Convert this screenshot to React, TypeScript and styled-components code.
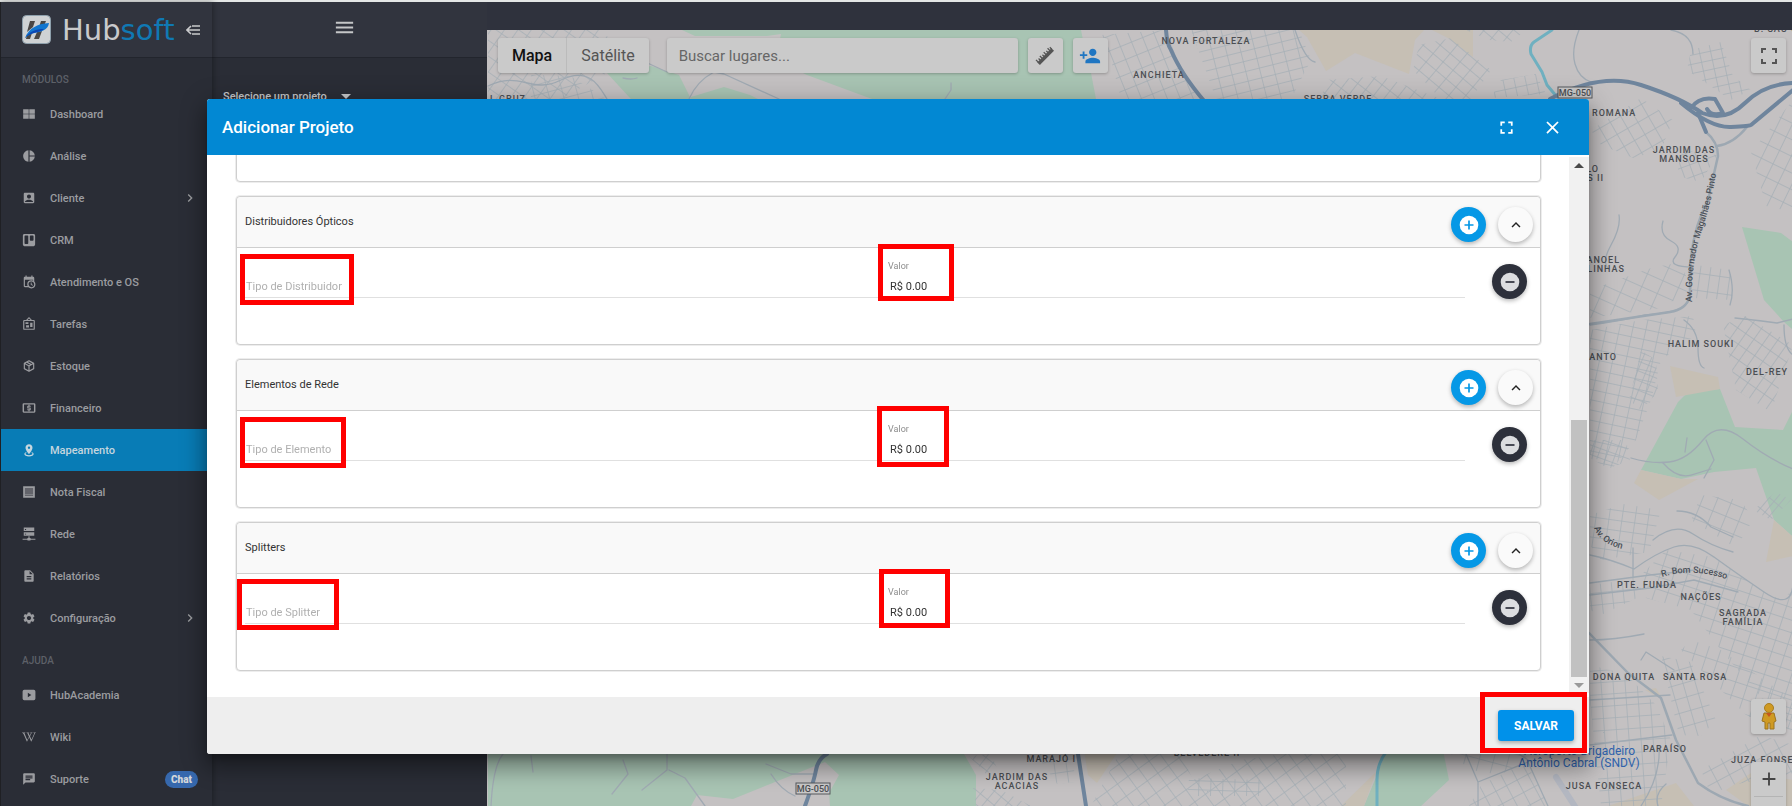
import React, { useId } from "react";
import styled, { createGlobalStyle, css } from "styled-components";
import {
  MdAccountBox,
  MdAdd,
  MdArrowDropDown,
  MdChat,
  MdChevronRight,
  MdClose,
  MdDescription,
  MdExpandLess,
  MdFullscreen,
  MdMenu,
  MdPersonAdd,
  MdPieChart,
  MdSettings,
} from "react-icons/md";
import { FaTrello, FaWikipediaW } from "react-icons/fa";

const GlobalStyle = createGlobalStyle`
  * { box-sizing: border-box; }
  body {
    margin: 0;
    background: #2a2d36;
    font-family: Roboto, "Liberation Sans", sans-serif;
    overflow: hidden;
  }
  button, input, select { font-family: inherit; }
`;

/* ---------- page frame ---------- */

const Page = styled.div`
  display: flex;
  height: 100vh;
  border-top: 2px solid #e4e7e6;
  background: #2a2d36;
`;

const Sidebar = styled.aside`
  display: flex;
  flex-direction: column;
  flex: 0 0 212px;
  border-left: 1px solid #1f2024;
  background: #2a2d36;
  box-shadow: 1px 0 6px rgba(0, 0, 0, 0.35);
  z-index: 1;
`;

const headerBar = css`
  display: flex;
  align-items: center;
  flex: 0 0 56px;
  background: #31343e;
  border-bottom: 1px solid #22252d;
`;

const BrandBar = styled.header`
  ${headerBar}
  padding: 0 12px 0 21px;
`;

const BrandMark = styled.svg`
  width: 29px;
  height: 29px;
`;

const BrandName = styled.span`
  margin-left: 11px;
  flex: 1;
  font-family: "DejaVu Sans", sans-serif;
  font-size: 29px;
  line-height: 32px;
  color: #c9cacc;

  span {
    color: #1079b4;
  }
`;

const BareButton = styled.button`
  display: flex;
  padding: 0;
  border: 0;
  background: none;
  color: inherit;
`;

const CollapseButton = styled(BareButton)`
  color: #c9cacc;
`;

const GroupTitle = styled.h2`
  margin: 0;
  padding: 15px 21px 6px;
  font-size: 10px;
  line-height: 14px;
  font-weight: 500;
  color: #5d6068;
`;

const NavItem = styled.a<{ $active?: boolean }>`
  display: flex;
  align-items: center;
  height: 42px;
  padding: 0 14px 0 21px;
  font-size: 11px;
  font-weight: 500;
  text-decoration: none;
  color: ${(p) => (p.$active ? "#c5d6df" : "#9b9ca0")};
  background: ${(p) => (p.$active ? "#087cb6" : "transparent")};

  svg {
    width: 14px;
    height: 14px;
  }
`;

const NavText = styled.span`
  flex: 1;
  margin-left: 14px;
`;

const MoreIcon = styled(MdChevronRight)`
  && {
    width: 16px;
    height: 16px;
    stroke: currentColor;
  }
`;

const ChatBadge = styled.span`
  padding: 0 6px;
  border-radius: 9px;
  background: #3668ad;
  color: #d3d6da;
  font-size: 10px;
  line-height: 17px;
  font-weight: 900;
`;

const ProjectPanel = styled.section`
  flex: 0 0 275px;
  background: #2a2d36;
`;

const PanelBar = styled.header`
  ${headerBar}
  height: 56px;
  justify-content: center;
  color: #c5c6c8;
  padding: 0 11px 4px 0;

  svg {
    width: 23px;
    height: 23px;
    stroke: currentColor;
  }
`;

const ProjectPicker = styled.label`
  display: flex;
  align-items: center;
  padding: 26px 11px;
  color: #c5c6c8;

  svg {
    margin-left: -12px;
    width: 24px;
    height: 24px;
    pointer-events: none;
  }
`;

const ProjectSelect = styled.select`
  appearance: none;
  width: 123px;
  padding: 0;
  border: 0;
  background: none;
  color: inherit;
  font-size: 11px;
  font-weight: 500;
`;

const MapColumn = styled.main`
  display: flex;
  flex-direction: column;
  flex: 1;
  min-width: 0;
`;

const TopBar = styled.div`
  flex: 0 0 28px;
  background: #2f323d;
`;

/* ---------- map ---------- */

const MapArea = styled.div`
  position: relative;
  flex: 1;
  min-height: 0;
  overflow: hidden;
  background: #c4c1c2;
`;

const MapCanvas = styled.svg`
  display: block;
  width: 100%;
  height: 100%;
`;

const MapTools = styled.div`
  position: absolute;
  inset: 8px 6px auto 11px;
  display: flex;
  gap: 10px;
`;

const mapCard = css`
  border: 0;
  border-radius: 3px;
  background: #cacaca;
  box-shadow: 0 1px 3px rgba(0, 0, 0, 0.25);
`;

const MapTypes = styled.div`
  ${mapCard}
  display: flex;
  height: 35px;
  margin-right: 8px;
`;

const MapType = styled.button<{ $on?: boolean }>`
  padding: 0 14px;
  border: 0;
  background: none;
  font-size: 16px;
  font-weight: ${(p) => (p.$on ? 500 : 400)};
  color: ${(p) => (p.$on ? "#111" : "#555")};

  & + & {
    border-left: 1px solid #bbb;
  }
`;

const MapSearch = styled.input`
  ${mapCard}
  width: 351px;
  height: 35px;
  padding: 0 12px;
  font-size: 15px;

  &::placeholder {
    color: #666;
    opacity: 1;
  }
`;

const MapButton = styled.button`
  ${mapCard}
  display: flex;
  align-items: center;
  justify-content: center;
  width: 35px;
  height: 35px;
  padding: 0;
  color: #555;
`;

const PersonIcon = styled(MdPersonAdd)`
  width: 22px;
  height: 22px;
  color: #1f76c2;
`;

const Spacer = styled.div`
  flex: 1;
`;

const MapCorner = styled.div`
  position: absolute;
  right: 6px;
  bottom: -36px;
  display: flex;
  flex-direction: column;
  gap: 28px;
`;

const ZoomControl = styled.div`
  ${mapCard}
  display: flex;
  flex-direction: column;
  align-items: center;
  height: 80px;
`;

const ZoomButton = styled(BareButton)`
  width: 29px;
  height: 35px;
  align-items: center;
  justify-content: center;
  color: #444;
  border-bottom: 1px solid #b4b4b4;

  svg {
    stroke: currentColor;
  }
`;

const PlaceLabel = styled.text`
  font-size: 9px;
  font-weight: 500;
  letter-spacing: 1px;
  fill: #4b4e52;
`;

const RoadLabel = styled.text`
  font-size: 9px;
  font-weight: 500;
  fill: #4a5058;
`;

const AirportLabel = styled.text`
  font-size: 12px;
  fill: #2f62ac;
`;

const ShieldLabel = styled.text`
  font-size: 9px;
  font-weight: 500;
  fill: #4b4e52;
`;

/* ---------- dialog ---------- */

const Overlay = styled.div`
  position: fixed;
  inset: 0;
  z-index: 2;
  display: flex;
  padding: 99px 203px 52px 207px;
`;

const Dialog = styled.section`
  display: flex;
  flex-direction: column;
  flex: 1;
  min-width: 0;
  border-radius: 3px;
  background: #fff;
  box-shadow: 0 7px 9px -4px rgba(0, 0, 0, 0.3),
    0 14px 21px 2px rgba(0, 0, 0, 0.24), 0 5px 26px 4px rgba(0, 0, 0, 0.2);
`;

const DialogHeader = styled.header`
  display: flex;
  align-items: center;
  flex: 0 0 56px;
  padding: 0 26px 0 15px;
  border-radius: 3px 3px 0 0;
  background: #0288d3;
  color: #fff;
`;

const DialogTitle = styled.h1`
  flex: 1;
  margin: 0;
  font-size: 17px;
  font-weight: 500;
`;

const DialogActions = styled.div`
  display: flex;
  gap: 25px;

  svg {
    width: 21px;
    height: 21px;
    stroke: currentColor;
  }
`;

const DialogBody = styled.div`
  display: flex;
  flex: 1;
  min-height: 0;
`;

const CardList = styled.div`
  display: flex;
  flex-direction: column;
  justify-content: flex-end;
  gap: 14px;
  flex: 1;
  min-width: 0;
  padding: 0 28px 26px 29px;
  overflow: hidden;
`;

const Card = styled.section`
  flex: 0 0 149px;
  border: 1px solid #cfcfcf;
  border-radius: 4px;
  background: #fff;
  box-shadow: 0 0 0 1px #ededed;
`;

const CardHeader = styled.header`
  display: flex;
  gap: 12px;
  height: 51px;
  padding: 10px 7px 0 8px;
  border-bottom: 1px solid #cfcfcf;
  border-radius: 4px 4px 0 0;
  background: #f9f9f9;
`;

const CardTitle = styled.h2`
  flex: 1;
  margin: 0;
  padding-top: 7px;
  font-size: 11px;
  line-height: 16px;
  font-weight: 400;
  color: #333;
`;

const tones = {
  add: "#0598e6",
  fold: "#fafafa",
  remove: "#2d303b",
};

const RoundButton = styled.button<{ $tone: keyof typeof tones }>`
  display: flex;
  align-items: center;
  justify-content: center;
  flex: 0 0 35px;
  height: 35px;
  padding: 0;
  border: 0;
  border-radius: 50%;
  background: ${(p) => tones[p.$tone]};
  color: #222;
  box-shadow: 0 2px 4px rgba(0, 0, 0, 0.28);
`;

const CardRow = styled.div`
  display: flex;
  align-items: flex-start;
  gap: 27px;
  padding: 0 13px 0 8px;
`;

const RowButton = styled(RoundButton)`
  margin-top: 16px;
`;

const Fields = styled.div`
  display: grid;
  grid-template-columns: 10fr 9fr;
  flex: 1;
  height: 50px;
  border-bottom: 1px solid #e0e0e0;
`;

const Field = styled.div`
  position: relative;
  display: flex;
  flex-direction: column;
  justify-content: flex-end;
  padding: 0 0 3px 1px;
`;

const FieldLabel = styled.label`
  font-size: 9px;
  line-height: 12px;
  color: #8c8c8c;
`;

const FieldInput = styled.input`
  width: 100%;
  height: 16px;
  margin-top: 1px;
  padding: 0;
  border: 0;
  background: none;
  font-size: 11px;
  color: #333;
  outline: 0;

  &::placeholder {
    color: #b0b0b0;
    opacity: 1;
  }
`;

const ValueInput = styled(FieldInput)`
  margin-top: 6px;
  padding-left: 2px;
`;

/* Red frame drawn over the part of the form it points out. */
const Highlight = styled.span<{ $x: number; $y: number; $w: number; $h: number }>`
  position: absolute;
  left: ${(p) => p.$x}px;
  top: ${(p) => p.$y}px;
  width: ${(p) => p.$w}px;
  height: ${(p) => p.$h}px;
  border: 5px solid #f00;
  pointer-events: none;
`;

const ScrollColumn = styled.div`
  display: flex;
  flex-direction: column;
  align-items: center;
  flex: 0 0 20px;
  margin: 2px 0 4px;
  background: #f1f1f1;
`;

const ScrollArrow = styled.svg`
  flex: 0 0 16px;
  width: 20px;
`;

const ScrollTrack = styled.div`
  display: flex;
  flex-direction: column;
  justify-content: flex-end;
  flex: 1;
  width: 16px;
`;

const ScrollThumb = styled.div`
  height: 51%;
  background: #c1c1c1;
`;

const DialogFooter = styled.footer`
  display: flex;
  align-items: center;
  justify-content: flex-end;
  flex: 0 0 57px;
  padding: 0 15px;
  border-radius: 0 0 3px 3px;
  background: #eee;
`;

const SaveSlot = styled.div`
  position: relative;
`;

const SaveButton = styled.button`
  width: 76px;
  height: 31px;
  padding: 0;
  border: 0;
  border-radius: 3px;
  background: #0091ea;
  color: #fff;
  font-size: 12px;
  font-weight: 700;
  box-shadow: 0 2px 4px rgba(0, 0, 0, 0.3);
`;

/* ---------- icons ---------- */

const Glyph = ({ d }: { d: string }) => (
  <svg viewBox="0 0 24 24" fill="currentColor" aria-hidden="true">
    <path fillRule="evenodd" d={d} />
  </svg>
);

const icons = {
  grid: "M2 4h9.500v7.500H2zM12.500 4H22v7.500h-9.500zM2 12.500h9.500V20H2zM12.500 12.500H22V20h-9.500z",
  calendarClock:
    "M15,13H16.5V15.82L18.94,17.23L18.19,18.53L15,16.69V13M19,8H5V19H9.67C9.24,18.09 9,17.07 9,16A7,7 0 0,1 16,9C17.07,9 18.09,9.24 19,9.67V8M5,21C3.89,21 3,20.1 3,19V5C3,3.89 3.89,3 5,3H6V1H8V3H16V1H18V3H19A2,2 0 0,1 21,5V11.1C22.24,12.36 23,14.09 23,16A7,7 0 0,1 16,23C14.09,23 12.36,22.24 11.1,21H5M16,11.15A4.85,4.85 0 0,0 11.15,16C11.15,18.68 13.32,20.85 16,20.85A4.85,4.85 0 0,0 20.85,16C20.85,13.32 18.68,11.15 16,11.15Z",
  board:
    "M12.04,2.5L9.53,5H14.53L12.04,2.5M4,7V20H20V7H4M12,0L17,5V5H20A2,2 0 0,1 22,7V20A2,2 0 0,1 20,22H4A2,2 0 0,1 2,20V7A2,2 0 0,1 4,5H7V5L12,0M7,18V14H12V18H7M14,17V10H18V17H14M6,12V9H11V12H6Z",
  box: "M21,16.5C21,16.88 20.79,17.21 20.47,17.38L12.57,21.82C12.41,21.94 12.21,22 12,22C11.79,22 11.59,21.94 11.43,21.82L3.53,17.38C3.21,17.21 3,16.88 3,16.5V7.5C3,7.12 3.21,6.79 3.53,6.62L11.43,2.18C11.59,2.06 11.79,2 12,2C12.21,2 12.41,2.06 12.57,2.18L20.47,6.62C20.79,6.79 21,7.12 21,7.5V16.5M12,4.15L10.11,5.22L16,8.61L17.96,7.5L12,4.15M6.04,7.5L12,10.85L13.96,9.75L8.08,6.35L6.04,7.5M5,15.91L11,19.29V12.58L5,9.21V15.91M19,15.91V9.21L13,12.58V19.29L19,15.91Z",
  cash: "M3 4h18a2 2 0 0 1 2 2v12a2 2 0 0 1-2 2H3a2 2 0 0 1-2-2V6a2 2 0 0 1 2-2M3.500 6v12h17V6zM11 6.500h2V8h2v2h-4v1h3a1 1 0 0 1 1 1v3a1 1 0 0 1-1 1h-1v1.500h-2V16H9v-2h4v-1h-3a1 1 0 0 1-1-1V9a1 1 0 0 1 1-1h1z",
  marker:
    "M12,2C15.31,2 18,4.66 18,7.95C18,12.41 12,19 12,19C12,19 6,12.41 6,7.95C6,4.66 8.69,2 12,2M12,6A2,2 0 0,0 10,8A2,2 0 0,0 12,10A2,2 0 0,0 14,8A2,2 0 0,0 12,6M20,19C20,21.21 16.42,23 12,23C7.58,23 4,21.21 4,19C4,17.71 5.22,16.56 7.11,15.83L7.75,16.74C6.67,17.19 6,17.81 6,18.5C6,19.88 8.69,21 12,21C15.31,21 18,19.88 18,18.5C18,17.81 17.33,17.19 16.25,16.74L16.89,15.83C18.78,16.56 20,17.71 20,19Z",
  note: "M2 2h20v20H2zM5 6v1.500h14V6zM5 9.500V11h14V9.500zM5 13v1.500h14V13zM5 16.500V18h14v-1.500z",
  server:
    "M3 1h18v6H3zM3 9h18v6H3zM5 3.500V5h2V3.500zM5 11.500V13h2v-1.500zM11 16h2v3h1a1 1 0 0 1 1 1h8v2h-8a1 1 0 0 1-1 1h-4a1 1 0 0 1-1-1H1v-2h8a1 1 0 0 1 1-1h1z",
  video:
    "M4 3h16a3 3 0 0 1 3 3v12a3 3 0 0 1-3 3H4a3 3 0 0 1-3-3V6a3 3 0 0 1 3-3M10 8v8l6-4z",
};

const LogoIcon = () => (
  <BrandMark viewBox="0 0 29 29" aria-hidden="true">
    <rect x="0.500" y="0.500" width="28" height="28" rx="4" fill="#cfd2d4" stroke="#8ea0ac" />
    <path d="M8 6h5l-2 6-6 5zM19 6h5l-2 5-5 1zM15 17l5-1-3 8h-5zM5 19l5-1-2 6H4z" fill="#4a4745" />
    <path d="M3 23C7 13 15 9 27 8c-1 7-8 9-15 10-4 1-7 3-9 5z" fill="#1276cf" />
    <path d="M3 23C8 16 14 14 22 14c-4 4-14 3-19 9z" fill="#0b46b4" />
  </BrandMark>
);

const CollapseIcon = () => (
  <svg width="14" height="12" viewBox="0 0 14 12" fill="none" stroke="currentColor" strokeWidth="1.600" aria-hidden="true">
    <path d="M6 2h8M2 6h12M6 10h8M5 2L1 6l4 4" />
  </svg>
);

const RulerIcon = () => (
  <svg width="20" height="20" viewBox="0 0 22 22" aria-hidden="true">
    <g transform="rotate(-45 11 11)">
      <rect x="0" y="10" width="22" height="4" fill="#555" />
      <path d="M1 7v4M4 8v3M7 7v4M10 8v3M13 7v4M16 8v3M19 7v4M21.500 8v3" stroke="#555" strokeWidth="1.400" />
    </g>
  </svg>
);

const ExpandIcon = ({ size }: { size: number }) => (
  <svg width={size} height={size} viewBox="0 0 16 16" fill="none" stroke="currentColor" strokeWidth="2" aria-hidden="true">
    <path d="M1 5V1h4M11 1h4v4M15 11v4h-4M5 15H1v-4" />
  </svg>
);

const PegmanIcon = () => (
  <svg width="16" height="27" viewBox="0 0 16 27" aria-hidden="true">
    <path d="M3 10h10l2 8-2 1v7H9v-6H7v6H4v-7l-3-1z" fill="#cf9a23" stroke="#9c7420" />
    <circle cx="8" cy="5" r="4.500" fill="#cf9a23" stroke="#a87c20" />
    <path d="M5 10h6l-3 4z" fill="#c4561f" />
  </svg>
);

const CircleIcon = ({ disc, ink, plus }: { disc: string; ink: string; plus?: boolean }) => (
  <svg width="20" height="20" viewBox="0 0 20 20" aria-hidden="true">
    <circle cx="10" cy="10" r="9.300" fill={disc} />
    <path d={plus ? "M5.500 10h9M10 5.500v9" : "M5.500 10h9"} stroke={ink} strokeWidth="1.700" />
  </svg>
);

/* ---------- map drawing ---------- */

type Patch = { points: string; angle: number; w: number; h: number };

/* A neighbourhood: a polygon filled with a rotated street grid. */
const Streets = ({ points, angle, w, h }: Patch) => {
  const id = useId();
  return (
    <>
      <pattern id={id} width={w} height={h} patternUnits="userSpaceOnUse" patternTransform={`rotate(${angle})`}>
        <path d={`M0 0H${w}M0 0V${h}`} stroke="#a6afb6" strokeWidth="1.500" fill="none" />
      </pattern>
      <polygon points={points} fill={`url(#${id})`} />
    </>
  );
};

const greens = [
  "681,30 694,36 766,36 780,34 775,60 806,75 871,99 871,130 1100,130 1095,99 1090,73 1083,45 1080,30",
  "606,73 650,66 678,75 690,99 690,110 640,110",
  "690,97 723,87 749,95 757,99 757,110 690,110",
  "1741,227 1780,233 1792,242 1792,330 1783,322 1763,300",
  "1677,402 1687,392 1719,389 1734,427 1782,430 1792,410 1792,537 1773,520 1755,468 1713,472 1680,479 1640,470",
  "487,740 955,740 975,775 975,806 829,806 828,793 838,775 824,762 732,799 696,795 690,806 487,806",
  "1390,740 1440,740 1448,780 1420,806 1363,806 1378,770",
];

const sands = [
  "1298,30 1306,37 1325,71 1354,53 1408,74 1414,40 1423,30",
  "1431,30 1472,30 1472,57 1447,38",
  "1669,366 1717,377 1719,389 1675,397",
  "1640,470 1633,483 1658,500 1697,479 1680,479",
  "1773,520 1792,537 1792,556 1765,562",
  "1607,806 1675,783 1693,806",
  "1725,790 1750,773 1792,780 1792,806 1747,806",
  "1340,806 1375,772 1363,806",
  "1083,750 1118,750 1096,783 1087,775",
  "1644,690 1655,688 1662,700",
];

const patches: Patch[] = [
  { points: "487,30 600,30 612,42 640,50 650,66 606,73 560,99 487,99", angle: 35, w: 11, h: 13 },
  { points: "530,75 570,76 605,99 530,99", angle: -15, w: 14, h: 10 },
  { points: "1100,35 1165,30 1180,70 1200,99 1120,99 1110,60", angle: -22, w: 12, h: 14 },
  { points: "1190,30 1298,30 1310,60 1290,99 1215,99", angle: -14, w: 14, h: 10 },
  { points: "1325,80 1380,76 1440,99 1320,99", angle: 38, w: 10, h: 14 },
  { points: "1418,45 1450,38 1490,70 1470,99 1440,99 1412,70", angle: 40, w: 13, h: 11 },
  { points: "1465,30 1525,30 1510,42 1488,40", angle: 40, w: 11, h: 10 },
  { points: "1500,80 1535,74 1545,94 1490,98", angle: -12, w: 11, h: 10 },
  { points: "1690,50 1720,42 1732,76 1750,90 1730,100 1686,70", angle: -12, w: 11, h: 9 },
  { points: "1590,130 1640,98 1672,120 1660,150 1632,158 1600,145", angle: -30, w: 12, h: 14 },
  { points: "1680,150 1716,155 1700,182 1676,176", angle: -20, w: 9, h: 12 },
  { points: "1750,152 1792,100 1792,212 1765,206", angle: 26, w: 13, h: 15 },
  { points: "1589,290 1650,268 1680,262 1690,290 1660,308 1589,318", angle: 24, w: 17, h: 14 },
  { points: "1689,264 1728,270 1732,300 1692,298", angle: 8, w: 10, h: 17 },
  { points: "1589,330 1640,320 1692,316 1695,335 1660,360 1650,400 1635,440 1610,470 1589,458", angle: 12, w: 13, h: 10 },
  { points: "1640,350 1655,360 1657,392 1640,410 1628,400", angle: 22, w: 8, h: 9 },
  { points: "1722,325 1745,316 1792,345 1770,412 1735,390", angle: 35, w: 10, h: 13 },
  { points: "1589,440 1625,440 1629,460 1610,468 1589,455", angle: 20, w: 8, h: 9 },
  { points: "1589,515 1622,504 1660,510 1648,552 1600,560 1589,545", angle: 8, w: 13, h: 10 },
  { points: "1700,495 1740,500 1752,520 1735,548 1690,520", angle: 22, w: 14, h: 14 },
  { points: "1752,510 1775,492 1790,500 1770,520", angle: 40, w: 6, h: 14 },
  { points: "1640,575 1665,550 1712,557 1760,590 1780,600 1792,590 1792,735 1720,650 1690,610 1645,598", angle: 18, w: 13, h: 12 },
  { points: "1720,650 1690,640 1680,650 1745,715 1792,740 1792,700", angle: 18, w: 12, h: 14 },
  { points: "1589,585 1640,578 1640,596 1600,615 1589,610", angle: -6, w: 11, h: 12 },
  { points: "1589,665 1625,674 1655,705 1670,740 1660,806 1600,806 1589,700", angle: -4, w: 12, h: 12 },
  { points: "1660,656 1690,662 1715,720 1700,736 1678,735", angle: -16, w: 12, h: 14 },
  { points: "1700,770 1760,735 1792,745 1792,775 1730,785 1710,795", angle: -28, w: 14, h: 13 },
  { points: "1480,785 1525,762 1548,806 1468,806", angle: -28, w: 12, h: 14 },
  { points: "1090,806 1120,750 1180,754 1192,780 1240,760 1345,745 1345,806", angle: -36, w: 13, h: 15 },
  { points: "1188,778 1260,780 1260,796 1186,796", angle: 2, w: 12, h: 9 },
  { points: "972,788 1000,790 1030,806 975,806", angle: 40, w: 9, h: 11 },
  { points: "968,756 990,754 996,768 985,774", angle: 38, w: 9, h: 10 },
  { points: "1035,754 1072,754 1074,782 1056,784", angle: -8, w: 12, h: 12 },
  { points: "1450,754 1530,754 1500,775 1470,770", angle: 15, w: 14, h: 14 },
];

const lanes = [
  "M487 86C520 70 530 95 560 80S600 90 606 99",
  "M622 78q8 2 14 0M640 60l26 12M688 99q8-18 25-27l10 2 55 25M944 99l6-9v-7",
  "M1294 30q10 30 20 32M1578 30q-8 20-4 34t16 18M1670 30q22 4 22 24",
  "M1618 215q2 12-8 30t-2 24M1662 221q-4 14 8 20t4 16 18 10M1728 270q6 20 1 35",
  "M1589 325q30-4 55-10 40-2 45-17l2-30M1683 320q14 10 14 28t6 20M1734 318q20 2 42 5l16-4M1783 325q0 24 9 30",
  "M1630 458q20 6 38 4t34-22 40-1 50 30M1686 438l-2 14M1705 440l8 20-10 18",
  "M1662 463q14 16 28 12l20-6",
  "M1676 511q20 0 34 16l22 10M1652 540q22-18 40-6t40 18",
  "M1589 555q20 4 44 14 22-16 40-22t40 10 50 35 29-9",
  "M1632 548v30M1589 583l60-8 45-5 M1589 595l60-7 44-8 44 12",
  "M1589 640q24 0 54-6M1640 660l5-8 28 18M1589 700l80-5M1589 745l82-10",
  "M1465 754l12 28 50-20 20 44M1477 782v24M1518 754l12 8",
  "M1640 806q20-30 18-60M1657 806q-4-12 8-22",
  "M490 806q2-40 12-52M622 760l5 14-16 20 M666 754v16l-25 20M668 770l16 8 20 28M765 764l25 10h25M770 774q10 16 24 22M530 756l2 16",
];

const mainRoads = [
  "M1588 633L1627 673 1660 698 1675 740 1697 783Q1720 800 1747 806",
  "M1705 132q12 10 12 24l-10 44q-16 30-18 70v26q-4 14-20 16l-80 12",
  "M1716 146q16-2 30-19",
];

const highways = [
  "M1165 30q1 14 5 20 10 24 34 52",
  "M1549 99Q1600 72 1640 85T1701 113Q1725 122 1744 103T1792 83",
  "M1680 103Q1710 128 1730 127T1750 125L1792 90",
  "M1690 108q8-12 24-9l8 14q-12 4-16-4",
  "M1697 113l8 19",
  "M826 754q-9 5-11 16T804 806",
  "M1077 754L1085 806",
];

type Place = { x: number; y: number; text: string; anchor?: "start" | "middle" | "end" };

const places: Place[] = [
  { x: 1205, y: 44, text: "NOVA FORTALEZA" },
  { x: 1158, y: 78, text: "ANCHIETA" },
  { x: 1337, y: 102, text: "SERRA VERDE" },
  { x: 489, y: 102, text: "L CRUZ", anchor: "start" },
  { x: 1753, y: 32, text: "B. SÃO C", anchor: "start" },
  { x: 1591, y: 116, text: "ROMANA", anchor: "start" },
  { x: 1683, y: 153, text: "JARDIM DAS" },
  { x: 1683, y: 162, text: "MANSOES" },
  { x: 1598, y: 172, text: "LO", anchor: "end" },
  { x: 1603, y: 181, text: "S II", anchor: "end" },
  { x: 1619, y: 263, text: "MANOEL", anchor: "end" },
  { x: 1624, y: 272, text: "LINHAS", anchor: "end" },
  { x: 1700, y: 347, text: "HALIM SOUKI" },
  { x: 1616, y: 360, text: "SANTO", anchor: "end" },
  { x: 1766, y: 375, text: "DEL-REY" },
  { x: 1646, y: 588, text: "PTE. FUNDA" },
  { x: 1700, y: 600, text: "NAÇÕES" },
  { x: 1742, y: 616, text: "SAGRADA" },
  { x: 1742, y: 625, text: "FAMÍLIA" },
  { x: 1623, y: 680, text: "DONA QUITA" },
  { x: 1694, y: 680, text: "SANTA ROSA" },
  { x: 1664, y: 752, text: "PARAÍSO" },
  { x: 1730, y: 763, text: "JUZA FONSECA", anchor: "start" },
  { x: 1603, y: 789, text: "JUSA FONSECA" },
  { x: 1075, y: 762, text: "MARAJÓ I", anchor: "end" },
  { x: 1016, y: 780, text: "JARDIM DAS" },
  { x: 1016, y: 789, text: "ACACIAS" },
  { x: 1206, y: 756, text: "BELVEDERE II" },
];

const Shield = ({ x, y }: { x: number; y: number }) => (
  <g>
    <rect x={x} y={y} width="34" height="11" fill="#c9c8c8" stroke="#55585c" />
    <ShieldLabel x={x + 17} y={y + 9} textAnchor="middle">
      MG-050
    </ShieldLabel>
  </g>
);

const CityMap = () => (
  <MapCanvas viewBox="486 30 1305 776" preserveAspectRatio="xMinYMin slice" role="img" aria-label="Mapa">
    <g fill="#a8c4b3">
      {greens.map((p) => (
        <polygon key={p} points={p} />
      ))}
    </g>
    <g fill="#c6bfb4">
      {sands.map((p) => (
        <polygon key={p} points={p} />
      ))}
    </g>
    {patches.map((p) => (
      <Streets key={p.points} {...p} />
    ))}
    <g fill="none" strokeLinecap="round" strokeLinejoin="round">
      <g stroke="#a0aab3" strokeWidth="1.300">
        {lanes.map((d) => (
          <path key={d} d={d} />
        ))}
      </g>
      <g stroke="#9da8b2" strokeWidth="2.500">
        {mainRoads.map((d) => (
          <path key={d} d={d} />
        ))}
      </g>
      <path d="M1555 777L1575 808" stroke="#b3b7c1" strokeWidth="6" />
      <g stroke="#6fb0c0" strokeWidth="3">
        <path d="M1551 30L1533 42Q1528 46 1530 54L1541 72 1546 85 1556 97" />
        <path d="M1385 752Q1376 764 1376 780V806" />
      </g>
      <g stroke="#6f859d" strokeWidth="4">
        {highways.map((d) => (
          <path key={d} d={d} />
        ))}
      </g>
    </g>
    <Shield x={1557} y={87} />
    <Shield x={795} y={783} />
    {places.map((p) => (
      <PlaceLabel key={p.text + p.x} x={p.x} y={p.y} textAnchor={p.anchor ?? "middle"}>
        {p.text}
      </PlaceLabel>
    ))}
    <defs>
      <path id="road-governador" d="M1691 302Q1690 262 1701 230T1718 155" />
      <path id="road-orion" d="M1593 528Q1600 546 1628 550" />
      <path id="road-sucesso" d="M1661 577Q1696 566 1735 583" />
    </defs>
    <RoadLabel>
      <textPath href="#road-governador">Av. Governador Magalhães Pinto</textPath>
    </RoadLabel>
    <RoadLabel>
      <textPath href="#road-orion">Av. Orion</textPath>
    </RoadLabel>
    <RoadLabel>
      <textPath href="#road-sucesso">R. Bom Sucesso</textPath>
    </RoadLabel>
    <AirportLabel x="1634" y="755" textAnchor="end">
      Aeroporto Brigadeiro
    </AirportLabel>
    <AirportLabel x="1578" y="767" textAnchor="middle">
      Antônio Cabral (SNDV)
    </AirportLabel>
  </MapCanvas>
);

/* ---------- data ---------- */

type NavEntry = { label: string; icon: React.ReactNode; more?: boolean; badge?: string };

const modules: NavEntry[] = [
  { label: "Dashboard", icon: <Glyph d={icons.grid} /> },
  { label: "Análise", icon: <MdPieChart /> },
  { label: "Cliente", icon: <MdAccountBox />, more: true },
  { label: "CRM", icon: <FaTrello /> },
  { label: "Atendimento e OS", icon: <Glyph d={icons.calendarClock} /> },
  { label: "Tarefas", icon: <Glyph d={icons.board} /> },
  { label: "Estoque", icon: <Glyph d={icons.box} /> },
  { label: "Financeiro", icon: <Glyph d={icons.cash} /> },
  { label: "Mapeamento", icon: <Glyph d={icons.marker} /> },
  { label: "Nota Fiscal", icon: <Glyph d={icons.note} /> },
  { label: "Rede", icon: <Glyph d={icons.server} /> },
  { label: "Relatórios", icon: <MdDescription /> },
  { label: "Configuração", icon: <MdSettings />, more: true },
];

const help: NavEntry[] = [
  { label: "HubAcademia", icon: <Glyph d={icons.video} /> },
  { label: "Wiki", icon: <FaWikipediaW /> },
  { label: "Suporte", icon: <MdChat />, badge: "Chat" },
];

type Frame = [number, number, number, number];

const sections: { title: string; kind: string; kindFrame: Frame; valueFrame: Frame }[] = [
  {
    title: "Distribuidores Ópticos",
    kind: "Tipo de Distribuidor",
    kindFrame: [-5, 6, 114, 51],
    valueFrame: [-9, -4, 76, 57],
  },
  {
    title: "Elementos de Rede",
    kind: "Tipo de Elemento",
    kindFrame: [-5, 6, 106, 51],
    valueFrame: [-10, -5, 72, 61],
  },
  {
    title: "Splitters",
    kind: "Tipo de Splitter",
    kindFrame: [-8, 5, 102, 51],
    valueFrame: [-8, -5, 71, 59],
  },
];

/* ---------- composed parts ---------- */

const Nav = ({ title, entries }: { title: string; entries: NavEntry[] }) => (
  <nav aria-label={title}>
    <GroupTitle>{title}</GroupTitle>
    {entries.map((e) => (
      <NavItem key={e.label} href="#" $active={e.label === "Mapeamento"}>
        {e.icon}
        <NavText>{e.label}</NavText>
        {e.more && <MoreIcon />}
        {e.badge && <ChatBadge>{e.badge}</ChatBadge>}
      </NavItem>
    ))}
  </nav>
);

const Mark = ({ frame: [x, y, w, h] }: { frame: Frame }) => <Highlight $x={x} $y={y} $w={w} $h={h} />;

const EquipmentCard = ({ title, kind, kindFrame, valueFrame }: (typeof sections)[number]) => {
  const id = useId();
  return (
    <Card>
      <CardHeader>
        <CardTitle>{title}</CardTitle>
        <RoundButton $tone="add" aria-label="Adicionar">
          <CircleIcon disc="#fff" ink="#0598e6" plus />
        </RoundButton>
        <RoundButton $tone="fold" aria-label="Recolher">
          <MdExpandLess size={18} stroke="currentColor" />
        </RoundButton>
      </CardHeader>
      <CardRow>
        <Fields>
          <Field>
            <FieldInput aria-label={kind} placeholder={kind} />
            <Mark frame={kindFrame} />
          </Field>
          <Field>
            <FieldLabel htmlFor={id}>Valor</FieldLabel>
            <ValueInput id={id} defaultValue="R$ 0.00" />
            <Mark frame={valueFrame} />
          </Field>
        </Fields>
        <RowButton $tone="remove" aria-label="Remover">
          <CircleIcon disc="#dcdde0" ink="#2d303b" />
        </RowButton>
      </CardRow>
    </Card>
  );
};

export default function App() {
  return (
    <>
      <GlobalStyle />
      <Page>
        <Sidebar>
          <BrandBar>
            <LogoIcon />
            <BrandName>
              Hub<span>soft</span>
            </BrandName>
            <CollapseButton aria-label="Recolher menu">
              <CollapseIcon />
            </CollapseButton>
          </BrandBar>
          <Nav title="MÓDULOS" entries={modules} />
          <Nav title="AJUDA" entries={help} />
        </Sidebar>
        <ProjectPanel>
          <PanelBar>
            <BareButton aria-label="Menu">
              <MdMenu />
            </BareButton>
          </PanelBar>
          <ProjectPicker>
            <ProjectSelect aria-label="Projeto">
              <option>Selecione um projeto</option>
            </ProjectSelect>
            <MdArrowDropDown />
          </ProjectPicker>
        </ProjectPanel>
        <MapColumn>
          <TopBar />
          <MapArea>
            <CityMap />
            <MapTools>
              <MapTypes>
                <MapType $on>Mapa</MapType>
                <MapType>Satélite</MapType>
              </MapTypes>
              <MapSearch aria-label="Buscar lugares" placeholder="Buscar lugares..." />
              <MapButton aria-label="Medir">
                <RulerIcon />
              </MapButton>
              <MapButton aria-label="Adicionar cliente">
                <PersonIcon />
              </MapButton>
              <Spacer />
              <MapButton aria-label="Tela cheia">
                <ExpandIcon size={16} />
              </MapButton>
            </MapTools>
            <MapCorner>
              <MapButton aria-label="Street View">
                <PegmanIcon />
              </MapButton>
              <ZoomControl>
                <ZoomButton aria-label="Aumentar zoom">
                  <MdAdd size={22} />
                </ZoomButton>
              </ZoomControl>
            </MapCorner>
          </MapArea>
        </MapColumn>
      </Page>
      <Overlay>
        <Dialog role="dialog" aria-label="Adicionar Projeto">
          <DialogHeader>
            <DialogTitle>Adicionar Projeto</DialogTitle>
            <DialogActions>
              <BareButton aria-label="Maximizar">
                <MdFullscreen />
              </BareButton>
              <BareButton aria-label="Fechar">
                <MdClose />
              </BareButton>
            </DialogActions>
          </DialogHeader>
          <DialogBody>
            <CardList>
              <Card />
              {sections.map((s) => (
                <EquipmentCard key={s.title} {...s} />
              ))}
            </CardList>
            <ScrollColumn aria-hidden="true">
              <ScrollArrow viewBox="0 0 20 16">
                <path d="M5 11l5-5 5 5z" fill="#4a4a4a" />
              </ScrollArrow>
              <ScrollTrack>
                <ScrollThumb />
              </ScrollTrack>
              <ScrollArrow viewBox="0 0 20 16">
                <path d="M5 6l5 5 5-5z" fill="#9a9a9a" />
              </ScrollArrow>
            </ScrollColumn>
          </DialogBody>
          <DialogFooter>
            <SaveSlot>
              <SaveButton>SALVAR</SaveButton>
              <Mark frame={[-18, -18, 107, 61]} />
            </SaveSlot>
          </DialogFooter>
        </Dialog>
      </Overlay>
    </>
  );
}
